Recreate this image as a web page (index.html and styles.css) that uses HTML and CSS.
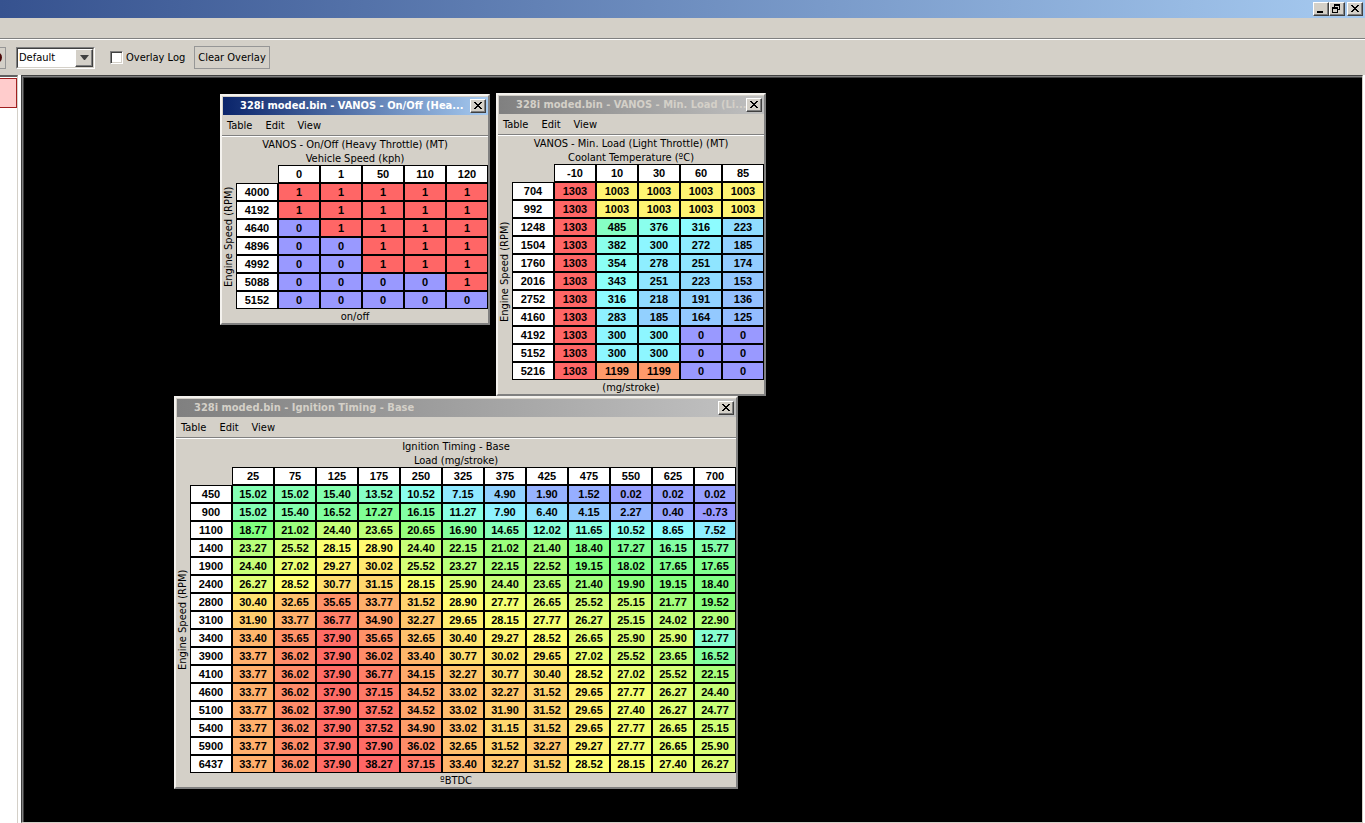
FILE: index.html
```html
<!DOCTYPE html>
<html lang="en">
<head>
  <meta charset="UTF-8">
  <meta name="viewport" content="width=device-width, initial-scale=1.0">
  <title>328i moded.bin</title>
  <link rel="stylesheet" href="styles.css">
</head>
<body>
  <header class="titlebar">
    <button class="win-btn" aria-label="Minimize">
      <svg width="12" height="10" viewBox="0 0 12 10"><path d="M2 7h6v2H2z"/></svg>
    </button>
    <button class="win-btn" aria-label="Restore">
      <svg width="12" height="10" viewBox="0 0 12 10"><path d="M3 0h6v6H7V5h1V2H4v1H3zM1 3h6v6H1zM2 5v3h4V5z" fill-rule="evenodd"/></svg>
    </button>
    <button class="win-btn win-close" aria-label="Close">
      <svg width="12" height="10" viewBox="0 0 12 10"><path d="M2 1h2v1h1v1h2V2h1V1h2v1H9v1H8v1H7v1h1v1h1v1h1v1H8V7H7V6H5v1H4v1H2V7h1V6h1V5h1V4H4V3H3V2H2z"/></svg>
    </button>
  </header>
  <div class="menu-strip"></div>

  <div class="toolbar">
    <button class="record" aria-label="Record"><span class="record-dot"></span></button>
    <div class="combo">
      <select aria-label="Overlay profile">
        <option>Default</option>
      </select>
      <span class="combo-arrow"><svg width="9" height="5" viewBox="0 0 9 5"><path d="M0 0h9L5 5H4z"/></svg></span>
    </div>
    <label class="overlay-log"><input type="checkbox"> Overlay Log</label>
    <button class="clear-overlay">Clear Overlay</button>
  </div>

  <main class="workspace">
    <aside class="tree"><div class="tree-item"></div></aside>
    <section class="desktop">
      <article class="frame active frame-vanos" data-table="vanos"></article>
      <article class="frame frame-load" data-table="load"></article>
      <article class="frame frame-ignition" data-table="ignition"></article>
    </section>
  </main>

  <script src="script.js"></script>
</body>
</html>
```
FILE: styles.css
```css
* {
  box-sizing: border-box;
}

body {
  display: flex;
  flex-direction: column;
  height: 100vh;
  margin: 0;
  overflow: hidden;
  background-color: #d4d0c8;
  color: #000;
  font-family: "DejaVu Sans Condensed", "DejaVu Sans", sans-serif;
  font-size: 11px;
  line-height: 14px;
}

button, select, input {
  font: inherit;
  color: inherit;
  margin: 0;
}

/* main window */
.titlebar {
  display: flex;
  flex: none;
  justify-content: flex-end;
  height: 18px;
  padding: 2px 2px 2px 0;
  background: linear-gradient(to right, #36528f, #a6caf0);
}

.win-btn {
  display: flex;
  flex: none;
  align-items: center;
  justify-content: center;
  width: 16px;
  height: 14px;
  padding: 0;
  background-color: #d4d0c8;
  border: 1px solid;
  border-color: #fff #404040 #404040 #fff;
  box-shadow: inset -1px -1px #808080;
}

.win-close {
  margin-left: 2px;
}

.menu-strip {
  flex: none;
  height: 22px;
  border-bottom: 1px solid #fff;
  box-shadow: inset 0 -1px #808080;
}

.toolbar {
  display: flex;
  flex: none;
  align-items: center;
  height: 35px;
}

.record {
  display: flex;
  align-items: center;
  width: 6px;
  height: 22px;
  padding: 0;
  overflow: hidden;
  background: none;
  border: 1px solid #969696;
  border-left: none;
}

.record-dot {
  flex: none;
  width: 11px;
  height: 11px;
  margin-left: -9px;
  border-radius: 50%;
  background-color: #4a0808;
}

.combo {
  position: relative;
  width: 79px;
  height: 22px;
  margin-left: 10px;
  border: 1px solid;
  border-color: #808080 #fff #fff #808080;
}

.combo select {
  appearance: none;
  width: 100%;
  height: 100%;
  padding: 0 20px 0 1px;
  background-color: #fff;
  border: 1px solid;
  border-color: #404040 #d4d0c8 #d4d0c8 #404040;
  border-radius: 0;
}

.combo-arrow {
  position: absolute;
  top: 1px;
  right: 1px;
  bottom: 1px;
  display: flex;
  align-items: center;
  justify-content: center;
  width: 18px;
  background-color: #d4d0c8;
  border: 1px solid;
  border-color: #fff #404040 #404040 #fff;
  box-shadow: inset -1px -1px #808080;
  fill: #404040;
  pointer-events: none;
}

.overlay-log {
  display: flex;
  align-items: center;
  gap: 3px;
  margin-left: 15px;
}

.overlay-log input {
  appearance: none;
  width: 13px;
  height: 13px;
  background-color: #fff;
  border: 1px solid;
  border-color: #808080 #fff #fff #808080;
  box-shadow: inset 1px 1px #404040, inset -1px -1px #d4d0c8;
}

.clear-overlay {
  height: 23px;
  margin-left: 9px;
  padding: 0 3px;
  background: none;
  border: 1px solid #969696;
}

.workspace {
  display: flex;
  flex: 1;
  gap: 3px;
  min-height: 0;
  padding-right: 2px;
  background-color: #fff;
}

.tree {
  width: 18px;
  padding-top: 1px;
  border-top: 2px solid #606060;
  border-right: 1px solid #d4d0c8;
}

.tree-item {
  height: 30px;
  background-color: #ffcccc;
  border: 1px solid #a02020;
  border-left: none;
}

.desktop {
  position: relative;
  flex: 1;
  background-color: #000;
  border: 1px solid;
  border-color: #404040 #d4d0c8 #d4d0c8 #404040;
  box-shadow: inset 1px 1px #808080, inset 2px 2px #404040;
}

/* table windows */
.frame {
  position: absolute;
  padding-top: 1px;
  background-color: #d4d0c8;
  border: 2px solid;
  border-color: #f4f2ee #808080 #808080 #f4f2ee;
}

.frame-vanos {
  left: 198px;
  top: 18px;
}

.frame-load {
  left: 474px;
  top: 17px;
}

.frame-ignition {
  left: 152px;
  top: 320px;
}

.frame-title {
  display: flex;
  align-items: center;
  height: 18px;
  margin-left: 1px;
  padding: 0 2px 0 17px;
  background: linear-gradient(to right, #808080, #c0c0c0);
  color: #d4d0c8;
}

.active .frame-title {
  background: linear-gradient(to right, #0a246a, #a6caf0);
  color: #fff;
}

.frame-title h2 {
  flex: 1;
  width: 0;
  margin: 0;
  font-size: 11px;
  white-space: nowrap;
}

.frame-menu {
  display: flex;
  gap: 13px;
  height: 22px;
  padding: 4px 5px 0;
  border-bottom: 1px solid #fff;
  box-shadow: inset 0 -1px #808080;
}

.frame-menu button {
  height: 14px;
  padding: 0;
  background: none;
  border: none;
}

.caption {
  height: 14px;
  margin: 0;
  line-height: 16px;
  text-align: center;
}

.grid {
  display: flex;
}

.axis-y {
  width: 14px;
  text-align: center;
  writing-mode: vertical-rl;
  transform: rotate(180deg);
}

.grid table {
  border-spacing: 0;
  font-family: "Liberation Sans", Arial, sans-serif;
  font-weight: bold;
  line-height: 16px;
  text-align: center;
}

.grid th, .grid td {
  width: 42px;
  height: 18px;
  padding: 0;
  border: 1px solid #000;
}

.grid th {
  background-color: #fff;
}

.grid .corner {
  background: none;
  border: none;
}
```
FILE: script.js
```js
const tables = {
  vanos: {
    title: '328i moded.bin - VANOS - On/Off (Hea...',
    name: 'VANOS - On/Off (Heavy Throttle) (MT)',
    xAxis: 'Vehicle Speed (kph)',
    yAxis: 'Engine Speed (RPM)',
    unit: 'on/off',
    columns: '0 1 50 110 120',
    rows: [
      '4000 1 1 1 1 1',
      '4192 1 1 1 1 1',
      '4640 0 1 1 1 1',
      '4896 0 0 1 1 1',
      '4992 0 0 1 1 1',
      '5088 0 0 0 0 1',
      '5152 0 0 0 0 0'
    ]
  },
  load: {
    title: '328i moded.bin - VANOS - Min. Load (Li...',
    name: 'VANOS - Min. Load (Light Throttle) (MT)',
    xAxis: 'Coolant Temperature (ºC)',
    yAxis: 'Engine Speed (RPM)',
    unit: '(mg/stroke)',
    columns: '-10 10 30 60 85',
    rows: [
      '704 1303 1003 1003 1003 1003',
      '992 1303 1003 1003 1003 1003',
      '1248 1303 485 376 316 223',
      '1504 1303 382 300 272 185',
      '1760 1303 354 278 251 174',
      '2016 1303 343 251 223 153',
      '2752 1303 316 218 191 136',
      '4160 1303 283 185 164 125',
      '4192 1303 300 300 0 0',
      '5152 1303 300 300 0 0',
      '5216 1303 1199 1199 0 0'
    ]
  },
  ignition: {
    title: '328i moded.bin - Ignition Timing - Base',
    name: 'Ignition Timing - Base',
    xAxis: 'Load (mg/stroke)',
    yAxis: 'Engine Speed (RPM)',
    unit: 'ºBTDC',
    columns: '25 75 125 175 250 325 375 425 475 550 625 700',
    rows: [
      '450 15.02 15.02 15.40 13.52 10.52 7.15 4.90 1.90 1.52 0.02 0.02 0.02',
      '900 15.02 15.40 16.52 17.27 16.15 11.27 7.90 6.40 4.15 2.27 0.40 -0.73',
      '1100 18.77 21.02 24.40 23.65 20.65 16.90 14.65 12.02 11.65 10.52 8.65 7.52',
      '1400 23.27 25.52 28.15 28.90 24.40 22.15 21.02 21.40 18.40 17.27 16.15 15.77',
      '1900 24.40 27.02 29.27 30.02 25.52 23.27 22.15 22.52 19.15 18.02 17.65 17.65',
      '2400 26.27 28.52 30.77 31.15 28.15 25.90 24.40 23.65 21.40 19.90 19.15 18.40',
      '2800 30.40 32.65 35.65 33.77 31.52 28.90 27.77 26.65 25.52 25.15 21.77 19.52',
      '3100 31.90 33.77 36.77 34.90 32.27 29.65 28.15 27.77 26.27 25.15 24.02 22.90',
      '3400 33.40 35.65 37.90 35.65 32.65 30.40 29.27 28.52 26.65 25.90 25.90 12.77',
      '3900 33.77 36.02 37.90 36.02 33.40 30.77 30.02 29.65 27.02 25.52 23.65 16.52',
      '4100 33.77 36.02 37.90 36.77 34.15 32.27 30.77 30.40 28.52 27.02 25.52 22.15',
      '4600 33.77 36.02 37.90 37.15 34.52 33.02 32.27 31.52 29.65 27.77 26.27 24.40',
      '5100 33.77 36.02 37.90 37.52 34.52 33.02 31.90 31.52 29.65 27.40 26.27 24.77',
      '5400 33.77 36.02 37.90 37.52 34.90 33.02 31.15 31.52 29.65 27.77 26.65 25.15',
      '5900 33.77 36.02 37.90 37.90 36.02 32.65 31.52 32.27 29.27 27.77 26.65 25.90',
      '6437 33.77 36.02 37.90 38.27 37.15 33.40 32.27 31.52 28.52 28.15 27.40 26.27'
    ]
  }
};

// blue for the lowest value, red for the highest
function cellColor(value, min, max) {
  const scale = (value - min) / (max - min);
  return `hsl(${240 - 240 * scale}, 100%, ${80 - 10 * scale}%)`;
}

function renderFrame(frame) {
  const table = tables[frame.dataset.table];
  const rows = table.rows.map(row => row.split(' '));
  const values = rows.flatMap(row => row.slice(1).map(Number));
  const min = Math.min(...values);
  const max = Math.max(...values);

  const head = table.columns.split(' ').map(c => `<th scope="col">${c}</th>`).join('');
  const body = rows.map(([label, ...cells]) => {
    const tds = cells.map(v => `<td style="background-color: ${cellColor(v, min, max)}">${v}</td>`).join('');
    return `<tr><th scope="row">${label}</th>${tds}</tr>`;
  }).join('');

  frame.innerHTML = `
    <header class="frame-title">
      <h2>${table.title}</h2>
      <button class="win-btn" aria-label="Close">
        <svg width="12" height="10" viewBox="0 0 12 10"><path d="M2 1h2v1h1v1h2V2h1V1h2v1H9v1H8v1H7v1h1v1h1v1h1v1H8V7H7V6H5v1H4v1H2V7h1V6h1V5h1V4H4V3H3V2H2z"/></svg>
      </button>
    </header>
    <nav class="frame-menu">
      <button>Table</button>
      <button>Edit</button>
      <button>View</button>
    </nav>
    <p class="caption">${table.name}</p>
    <p class="caption">${table.xAxis}</p>
    <div class="grid">
      <div class="axis-y">${table.yAxis}</div>
      <table>
        <thead><tr><td class="corner"></td>${head}</tr></thead>
        <tbody>${body}</tbody>
      </table>
    </div>
    <p class="caption">${table.unit}</p>`;
}

document.querySelectorAll('.frame').forEach(renderFrame);
```
